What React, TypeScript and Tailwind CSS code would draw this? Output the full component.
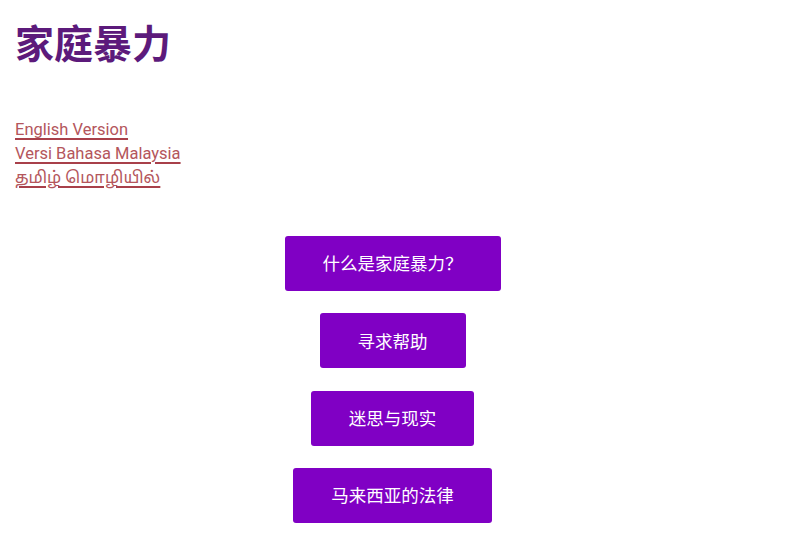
import React from 'react';

const links = ['English Version', 'Versi Bahasa Malaysia', 'தமிழ் மொழியில்'];
const buttons = ['什么是家庭暴力？', '寻求帮助', '迷思与现实', '马来西亚的法律'];

export default function App() {
  return (
    <div className="w-[785px] min-h-screen bg-white px-[15px] pt-[16px] font-[Roboto,'Noto_Sans_CJK_SC',sans-serif]">
      <h1 className="text-[39px] leading-[50px] font-bold text-[#5c1a7b] font-['Noto_Sans_CJK_SC',sans-serif]">
        家庭暴力
      </h1>

      <div className="mt-[52px] flex flex-col items-start">
        {links.map((l) => (
          <a
            key={l}
            href="#"
            className="text-[16.5px] leading-[24px] text-[#b4565c] underline decoration-2 underline-offset-[3px] decoration-[#a8404a] font-[Roboto,'Noto_Sans_Tamil','Noto_Sans',sans-serif]"
          >
            {l}
          </a>
        ))}
      </div>

      <div className="mt-[46px] flex flex-col items-center gap-[22.3px]">
        {buttons.map((b) => (
          <button
            key={b}
            className="h-[55px] px-[38px] rounded-[3px] bg-[#8000c4] text-[17.5px] text-white font-['Noto_Sans_CJK_SC',sans-serif]"
          >
            {b}
          </button>
        ))}
      </div>
    </div>
  );
}
